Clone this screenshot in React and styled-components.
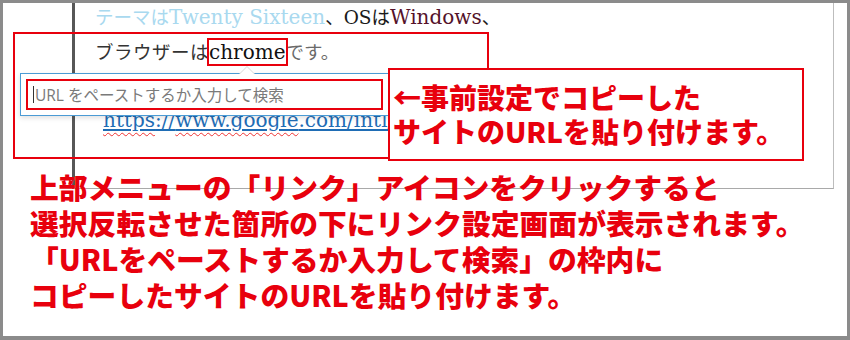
import React from 'react'
import styled, {createGlobalStyle} from 'styled-components'

const RED = '#e8000d'

const GlobalStyle = createGlobalStyle`
  html, body {
    margin: 0;
    padding: 0;
    background: #fff;
  }
  body {
    font-family: "Noto Sans CJK JP", sans-serif;
  }
`

function App() {
    return (
        <>
        <GlobalStyle />
        <Frame>
            <EditorPanel>
                <Para>
                    <Faded><Jp>テーマは</Jp>Twenty Sixteen</Faded><Jp>、OSは</Jp><Maroon>Windows</Maroon><Jp>、</Jp><br />
                    <Soft>ブラウザーは</Soft><Marked>chrome</Marked><Gray>です。</Gray>
                </Para>
                <LinkPara>
                    <Link><Miss>https</Miss>://<Miss>www.google</Miss>.com/intl/ja/chrome/</Link>
                </LinkPara>
            </EditorPanel>

            <Caption>
                上部メニューの「リンク」アイコンをクリックすると<br />
                選択反転させた箇所の下にリンク設定画面が表示されます。<br />
                「URLをペーストするか入力して検索」の枠内に<br />
                コピーしたサイトのURLを貼り付けます。
            </Caption>

            <RangeBox />

            <LinkPopup>
                <UrlField>
                    <Caret />
                    <Placeholder>URL をペーストするか入力して検索</Placeholder>
                </UrlField>
            </LinkPopup>

            <Callout>
                ←事前設定でコピーした<br />
                サイトのURLを貼り付けます。
            </Callout>
        </Frame>
        </>
    )
}

export default App


const Frame = styled.div`
    position: relative;
    width: 850px;
    height: 340px;
    box-sizing: border-box;
    border: 3px solid #8b8b8b;
    border-bottom-width: 4px;
    background: #fff;
    overflow: hidden;
`
const EditorPanel = styled.div`
    margin-left: 69px;
    width: 762px;
    height: 186px;
    box-sizing: border-box;
    border-left: 3px solid #575757;
    border-right: 1px solid #bdbdbd;
    border-bottom: 1px solid #a9a9a9;
    padding-left: 20px;
    overflow: hidden;
    font-family: "DejaVu Serif", "Noto Sans CJK JP", serif;
    font-size: 20px;
    line-height: 34px;
    color: #1a1a1a;
`
const Para = styled.p`
    margin: -3px 0 0;
    white-space: nowrap;
`
const Jp = styled.span`
    font-size: 18.5px;
`
const Faded = styled.span`
    color: #a9d9ef;
`
const Maroon = styled.span`
    color: #55122a;
`
const Soft = styled.span`
    font-size: 18.5px;
    color: #333;
    letter-spacing: 0.5px;
`
const Gray = styled.span`
    font-size: 18.5px;
    color: #6a6a6a;
`
const Marked = styled.span`
    color: #111;
    outline: 2px solid ${RED};
    outline-offset: 0;
`
const LinkPara = styled.p`
    margin: 33px 0 0 8px;
    white-space: nowrap;
`
const Link = styled.span`
    color: #1f6db5;
    text-decoration: underline;
    text-decoration-color: #1f6db5;
    text-underline-offset: 2px;
`
const Miss = styled.span`
    text-decoration: underline wavy #e33;
    text-underline-offset: 5px;
    text-decoration-thickness: 1px;
`
const Caption = styled.div`
    position: relative;
    margin-top: -20px;
    padding-left: 27px;
    font-size: 28.8px;
    font-weight: 900;
    line-height: 36px;
    color: ${RED};
    white-space: nowrap;
`
const RangeBox = styled.div`
    position: absolute;
    left: 10px;
    top: 29px;
    width: 476px;
    height: 127px;
    box-sizing: border-box;
    border: 2px solid ${RED};
`
const LinkPopup = styled.div`
    position: absolute;
    left: 17px;
    top: 70px;
    width: 369px;
    height: 43px;
    box-sizing: border-box;
    padding: 5px;
    background: #fff;
    border: 1px solid #4b9bd5;
    box-shadow: 0 2px 5px rgba(0, 0, 0, 0.12);

    &::before, &::after {
        content: "";
        position: absolute;
        left: 218px;
        border: 8px solid transparent;
        border-top: 0;
    }
    &::before {
        top: -8px;
        border-bottom-color: #d8d8d8;
    }
    &::after {
        top: -7px;
        border-bottom-color: #fff;
    }
`
const UrlField = styled.div`
    display: flex;
    align-items: center;
    height: 100%;
    box-sizing: border-box;
    border: 2px solid ${RED};
    padding-left: 5px;
    gap: 1px;
`
const Caret = styled.span`
    width: 1px;
    height: 17px;
    background: #333;
`
const Placeholder = styled.span`
    font-family: "Open Sans", "Noto Sans CJK JP", sans-serif;
    font-size: 15.5px;
    color: #7a7a7a;
`
const Callout = styled.div`
    position: absolute;
    left: 385px;
    top: 65px;
    width: 416px;
    height: 93px;
    box-sizing: border-box;
    border: 2px solid ${RED};
    background: #fff;
    padding: 10px 0 0 3px;
    font-size: 28px;
    font-weight: 900;
    line-height: 34px;
    color: ${RED};
    white-space: nowrap;
`
